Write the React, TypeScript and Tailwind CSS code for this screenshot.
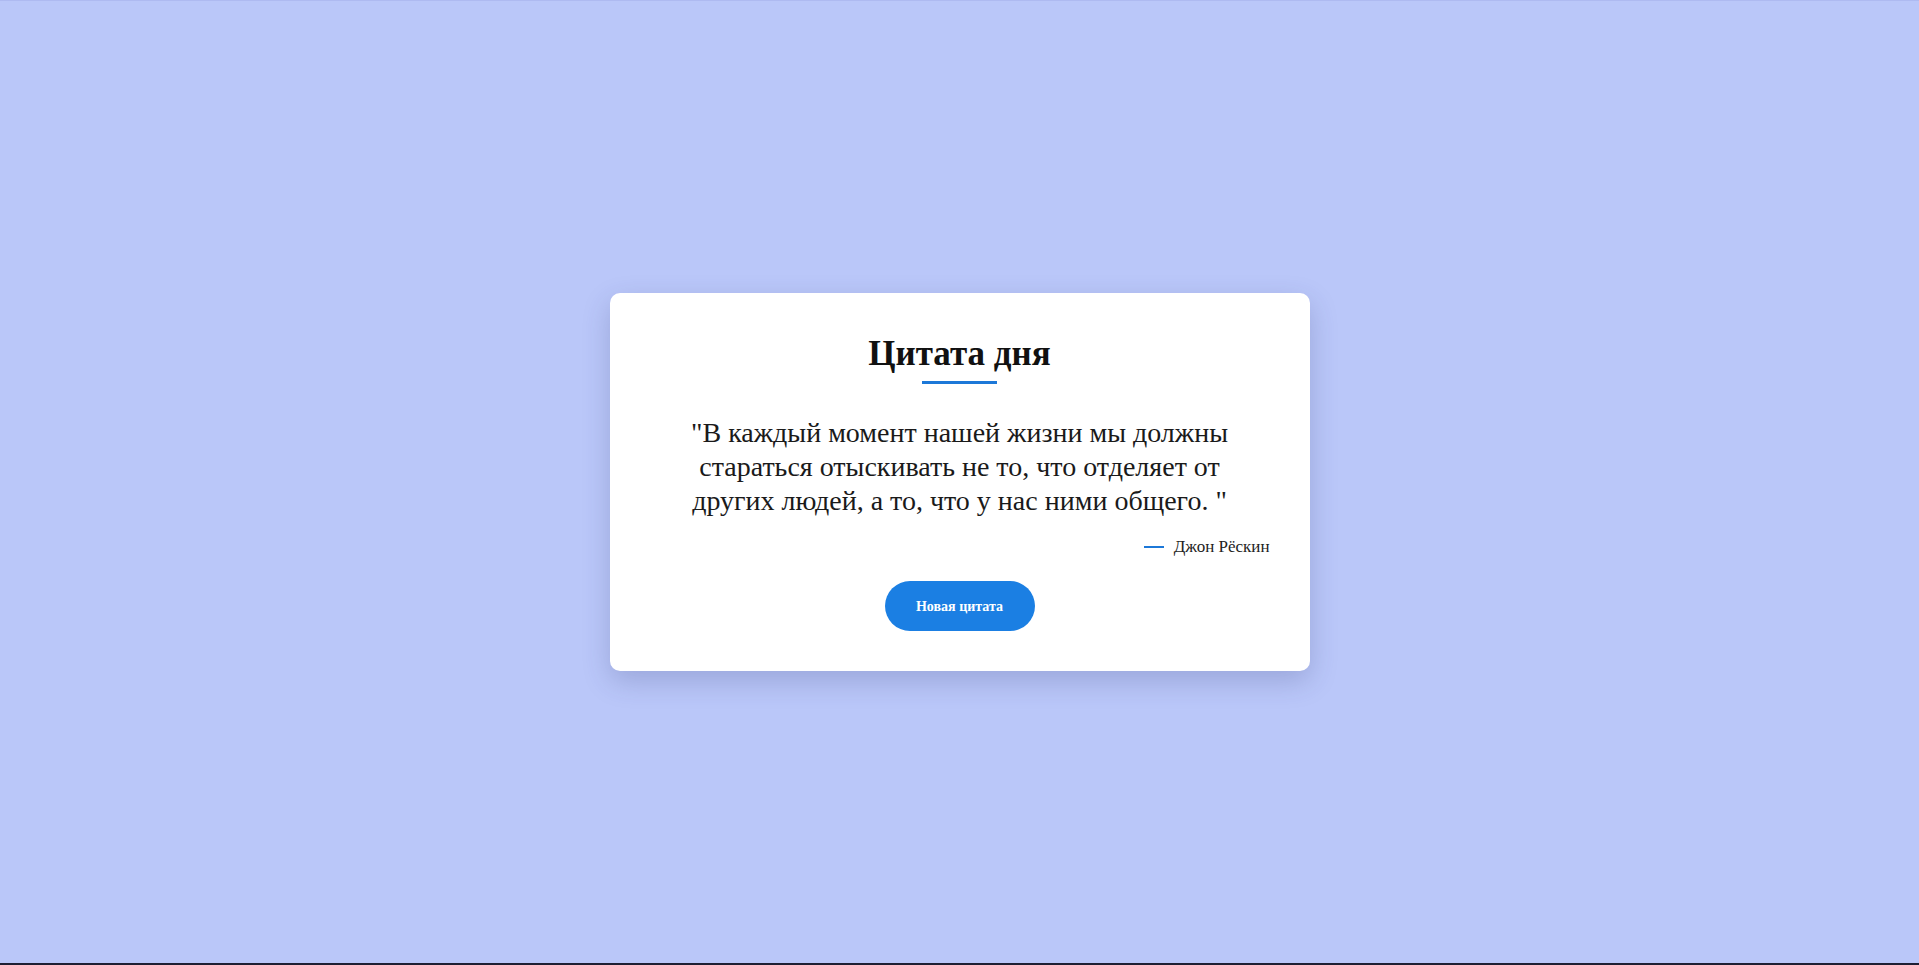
export default function App() {
  return (
    <div className="flex h-screen items-center justify-center border-t border-t-[#aebaf1] border-b-2 border-b-[#1d1f33] bg-[#bac7f9] font-['Liberation_Serif','DejaVu_Serif',serif]">
      <div className="w-[700px] rounded-[10px] bg-white p-10 shadow-[0_10px_28px_rgba(40,50,110,0.22)]">
        <h1 className="text-center text-[35px] leading-[42px] font-bold text-[#111]">
          Цитата дня
        </h1>
        <div className="mx-auto mt-[6px] h-[3px] w-[75px] bg-[#1c78d8]" />

        <p className="mx-auto mt-8 max-w-[585px] text-center text-[28px] leading-[34px] text-[#1a1a1a]">
          "В каждый момент нашей жизни мы должны стараться отыскивать не то, что отделяет от других людей, а то, что у нас ними общего. "
        </p>

        <div className="mt-[17px] flex items-center justify-end gap-2.5 text-[17px] leading-6 text-[#222]">
          <span className="h-[2px] w-5 bg-[#1c78d8]" />
          <span>Джон Рёскин</span>
        </div>

        <div className="mt-[22px] flex justify-center">
          <button className="h-[50px] w-[150px] rounded-full bg-[#1b7fe3] text-[14px] font-bold text-white">
            Новая цитата
          </button>
        </div>
      </div>
    </div>
  );
}
